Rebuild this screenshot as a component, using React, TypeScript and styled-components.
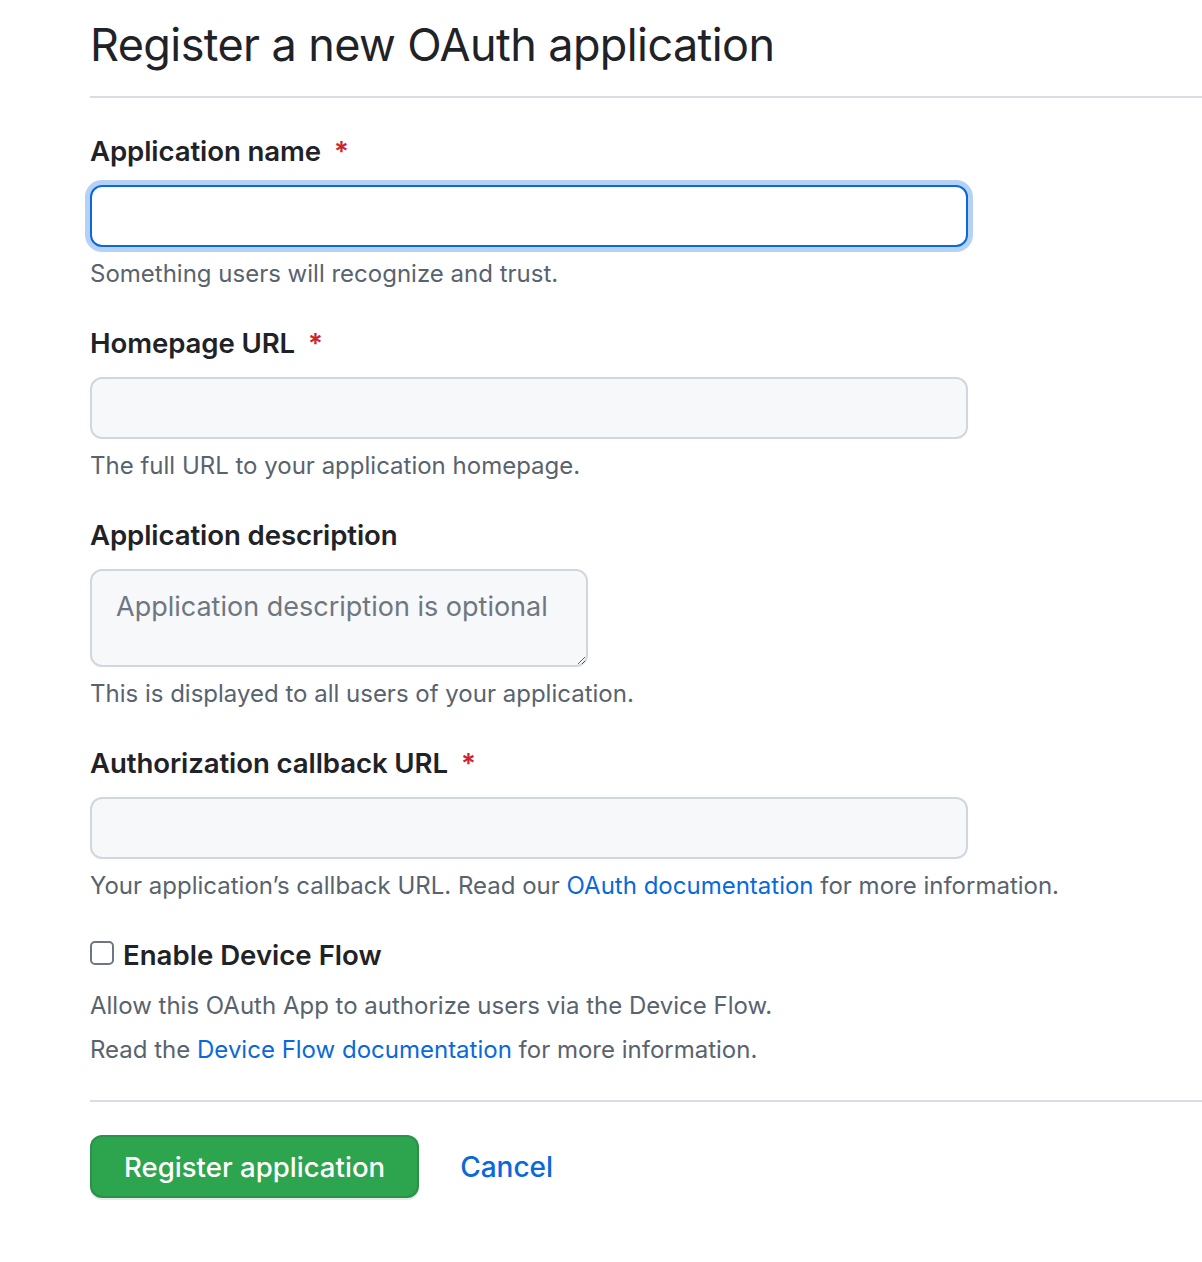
import React from 'react';
import styled, { createGlobalStyle, css } from 'styled-components';

const GlobalStyle = createGlobalStyle`
  html, body {
    margin: 0;
    padding: 0;
    background: #ffffff;
  }
  body {
    font-family: Inter, "Liberation Sans", Arial, sans-serif;
    color: #1f2328;
  }
`;

const Page = styled.div`
  padding-left: 90px;
  padding-bottom: 60px;
`;

const Subhead = styled.div`
  padding-top: 15px;
  padding-bottom: 21px;
  border-bottom: 2px solid #d8dee4;
  margin-bottom: 32px;
`;

const Heading = styled.h2`
  margin: 0;
  font-size: 45px;
  line-height: 60px;
  font-weight: 400;
  letter-spacing: -0.6px;
  color: #1f2328;
`;

const Form = styled.form`
  display: flex;
  flex-direction: column;
`;

const FormGroup = styled.div`
  display: flex;
  flex-direction: column;
  margin-bottom: 30px;
`;

const Label = styled.label`
  font-size: 27.6px;
  line-height: 42px;
  font-weight: 600;
  color: #1f2328;
  margin-bottom: 13px;
  letter-spacing: -0.1px;
`;

const Required = styled.span`
  color: #cf222e;
  margin-left: 13px;
`;

const focusStyle = css`
  background: #ffffff;
  border-color: #0969da;
  box-shadow: 0 0 0 5px rgba(9, 105, 218, 0.3);
`;

const TextInput = styled.input<{ $focused?: boolean; $width?: number }>`
  box-sizing: border-box;
  width: ${p => p.$width ?? 878}px;
  height: 62px;
  padding: 10px 24px;
  font-family: inherit;
  font-size: 28px;
  color: #1f2328;
  background: #f6f8fa;
  border: 2px solid #d0d7de;
  border-radius: 12px;
  outline: none;
  ${p => p.$focused && focusStyle}
`;

const TextArea = styled.textarea`
  box-sizing: border-box;
  width: 498px;
  height: 98px;
  padding: 16px 24px;
  font-family: inherit;
  font-size: 27px;
  line-height: 40px;
  color: #1f2328;
  background: #f6f8fa;
  border: 2px solid #d0d7de;
  border-radius: 12px;
  outline: none;
  resize: vertical;

  &::placeholder {
    color: #6e7781;
  }
`;

const Note = styled.p<{ $gap?: number }>`
  margin: ${p => p.$gap ?? 9}px 0 0;
  font-size: 24px;
  line-height: 36px;
  color: #59636e;
`;

const Link = styled.a`
  color: #0969da;
  text-decoration: none;
`;

const CheckRow = styled.label`
  display: flex;
  align-items: center;
  gap: 9px;
  font-size: 27.6px;
  line-height: 42px;
  font-weight: 600;
  color: #1f2328;
`;

const Checkbox = styled.input`
  appearance: none;
  margin: 0;
  width: 24px;
  height: 24px;
  border: 2px solid #6e7781;
  border-radius: 5px;
  background: #ffffff;
  box-sizing: border-box;
  margin-top: -4px;
`;

const Divider = styled.hr`
  border: none;
  border-top: 2px solid #d8dee4;
  margin: 32px 0 33px;
`;

const Actions = styled.div`
  display: flex;
  align-items: center;
  gap: 41px;
`;

const PrimaryButton = styled.button`
  box-sizing: border-box;
  height: 63px;
  padding: 0 32px;
  font-family: inherit;
  font-size: 27.6px;
  font-weight: 500;
  color: #ffffff;
  background: #2da44e;
  border: 2px solid rgba(31, 35, 40, 0.15);
  border-radius: 12px;
  box-shadow: 0 2px 0 rgba(31, 35, 40, 0.1);
  cursor: pointer;
`;

const CancelLink = styled.a`
  font-size: 28px;
  font-weight: 500;
  color: #0969da;
  text-decoration: none;
`;

export default function App() {
  return (
    <>
      <GlobalStyle />
      <Page>
        <Subhead>
          <Heading>Register a new OAuth application</Heading>
        </Subhead>
        <Form onSubmit={e => e.preventDefault()}>
          <FormGroup>
            <Label htmlFor="app-name">
              Application name<Required>*</Required>
            </Label>
            <TextInput id="app-name" type="text" $focused />
            <Note>Something users will recognize and trust.</Note>
          </FormGroup>

          <FormGroup>
            <Label htmlFor="homepage">
              Homepage URL<Required>*</Required>
            </Label>
            <TextInput id="homepage" type="text" />
            <Note>The full URL to your application homepage.</Note>
          </FormGroup>

          <FormGroup>
            <Label htmlFor="description">Application description</Label>
            <TextArea id="description" placeholder="Application description is optional" />
            <Note>This is displayed to all users of your application.</Note>
          </FormGroup>

          <FormGroup>
            <Label htmlFor="callback">
              Authorization callback URL<Required>*</Required>
            </Label>
            <TextInput id="callback" type="text" />
            <Note>
              Your application’s callback URL. Read our <Link href="#">OAuth documentation</Link> for more information.
            </Note>
          </FormGroup>

          <div>
            <CheckRow>
              <Checkbox type="checkbox" />
              Enable Device Flow
            </CheckRow>
            <Note $gap={12}>Allow this OAuth App to authorize users via the Device Flow.</Note>
            <Note $gap={8}>
              Read the <Link href="#">Device Flow documentation</Link> for more information.
            </Note>
          </div>

          <Divider />

          <Actions>
            <PrimaryButton type="submit">Register application</PrimaryButton>
            <CancelLink href="#">Cancel</CancelLink>
          </Actions>
        </Form>
      </Page>
    </>
  );
}
